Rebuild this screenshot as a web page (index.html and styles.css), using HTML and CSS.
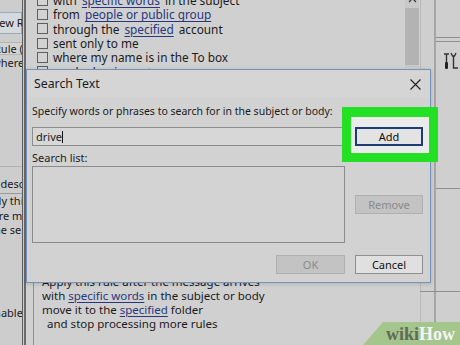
FILE: index.html
```html
<!DOCTYPE html>
<html lang="en">
<head>
  <meta charset="UTF-8" />
  <title>Search Text</title>
  <link rel="stylesheet" href="styles.css">
</head>
<body>
  <div class="desk">
    <!-- Rules and Alerts window, mostly hidden -->
    <aside class="rules-pane">
      <div class="new-rule">New Rule...</div>
      <div class="col-head">Rule (applied in the order shown)</div>
      <div class="pane-line l-where">where my name is in the To box</div>
      <div class="desc-head">Rule description</div>
      <div class="pane-line l-apply">Apply this rule after the message arrives</div>
      <div class="pane-line l-where2">where my name is in the To box</div>
      <div class="pane-line l-sender">the sender</div>
      <div class="pane-line l-enable">Enable</div>
    </aside>

    <!-- Rules Wizard window -->
    <section class="wizard">
      <div class="cond-area">
        <ul class="cond-list">
          <li><span class="box"></span>with <a>specific words</a> in the subject</li>
          <li><span class="box"></span>from <a>people or public group</a></li>
          <li><span class="box"></span>through the <a>specified</a> account</li>
          <li><span class="box"></span>sent only to me</li>
          <li><span class="box"></span>where my name is in the To box</li>
          <li><span class="box"></span>marked as importance</li>
        </ul>
        <div class="scrollbar">
          <svg class="arrow" width="9" height="6" viewBox="0 0 9 6"><path d="M1 5 L4.5 1.5 L8 5" fill="none" stroke="#333" stroke-width="1.2"/></svg>
          <div class="thumb"></div>
        </div>
      </div>
      <div class="desc-box">
        <div>Apply this rule after the message arrives</div>
        <div>with <a>specific words</a> in the subject or body</div>
        <div>move it to the <a>specified</a> folder</div>
        <div class="indent">and stop processing more rules</div>
      </div>
    </section>

    <!-- window behind, right edge -->
    <aside class="side-pane">
      <div class="side-inner">
        <div class="side-rule"></div>
        <svg class="tool-icon" width="16" height="18" viewBox="0 0 16 18">
          <path d="M1 2 H6 M3.5 2 V11" stroke="#333" stroke-width="1.4" fill="none"/>
          <rect x="2" y="10" width="3" height="7" rx="1.2" fill="#222"/>
          <path d="M8 1 L9.5 4 H11.5 L13 1 M10.5 4 V16 H15" stroke="#333" stroke-width="1.4" fill="none"/>
        </svg>
        <div class="side-rule low"></div>
        <div class="side-rule last"></div>
      </div>
    </aside>

    <!-- Search Text dialog -->
    <div class="dialog">
      <div class="dialog-title">
        <span>Search Text</span>
        <svg class="close" width="11" height="11" viewBox="0 0 11 11"><path d="M0.5 0.5 L10.5 10.5 M10.5 0.5 L0.5 10.5" stroke="#1e1e1e" stroke-width="1.1"/></svg>
      </div>
      <div class="dialog-body">
        <div class="prompt">Specify words or phrases to search for in the subject or body:</div>
        <div class="text-input">drive<span class="caret"></span></div>
        <button class="btn add">Add</button>
        <div class="list-label">Search list:</div>
        <div></div>
        <div class="search-list"></div>
        <button class="btn disabled remove">Remove</button>
        <div class="footer">
          <button class="btn disabled ok">OK</button>
          <button class="btn">Cancel</button>
        </div>
      </div>
      <div class="highlight"></div>
    </div>

    <div class="wikihow"><span class="wiki">wiki</span>How</div>
  </div>
</body>
</html>
```

FILE: styles.css
```css
body {
  margin: 0;
  background: #cecece;
  font-family: "Noto Sans", "Open Sans", sans-serif;
  font-size: 11px;
  color: #1b1b1b;
  overflow: hidden;
}

.desk {
  position: relative;
  width: 460px;
  height: 345px;
  overflow: hidden;
}

a {
  color: #27387f;
  text-decoration: underline;
  text-underline-offset: 2px;
}

/* left window */
.rules-pane {
  position: absolute;
  left: 0;
  top: 0;
  width: 22px;
  height: 345px;
  overflow: hidden;
  white-space: nowrap;
  border-right: 1px solid #5d5d5d;
  background: #cdcdcd;
}

.rules-pane div {
  box-sizing: border-box;
}

.new-rule {
  margin: 12px 0 0 -12px;
  height: 22px;
  line-height: 20px;
  padding-left: 2px;
  background: #d5dadf;
  border: 1px solid #98a9bb;
}

.col-head {
  margin: 8px 0 0 -7px;
  height: 13px;
  line-height: 11px;
  border: 1px solid #b4b4b4;
  border-right: none;
  background: #d4d4d4;
}

.pane-line {
  line-height: 14.5px;
}

.l-where {
  margin-left: -8px;
  line-height: 15px;
}

.desc-head {
  margin: 96px 0 0 -25px;
  height: 28px;
  padding-top: 9px;
  line-height: 16px;
  border-top: 1px solid #b0b0b0;
  border-bottom: 1px solid #9a9a9a;
}

.l-apply {
  margin-left: -22px;
}

.l-where2 {
  margin-left: -23px;
}

.l-sender {
  margin-left: -10px;
}

.l-enable {
  margin: 68px 0 0 -12px;
}

/* wizard window */
.wizard {
  position: absolute;
  left: 24px;
  top: 0;
  width: 395px;
  height: 345px;
  border-left: 2px solid #6a6a6a;
  background: #d0d0d0;
  display: grid;
  grid-template-rows: 275px 1fr;
}

.cond-area {
  display: flex;
  align-items: flex-start;
  padding-right: 1px;
  border-right: 1px solid #9c9c9c;
}

.cond-list {
  flex: 1;
  list-style: none;
  margin: -7px 0 0;
  padding: 0 0 0 11px;
  white-space: nowrap;
}

.cond-list li {
  display: flex;
  align-items: center;
  height: 14.3px;
  line-height: 14px;
  gap: 5px;
  font-size: 11.8px;
}

.box {
  width: 9px;
  height: 9px;
  border: 1px solid #5e5e5e;
  background: #d3d3d3;
  flex: none;
}

.scrollbar {
  width: 14px;
  height: 68px;
  background: #c9c9c9;
  position: relative;
}

.arrow {
  position: absolute;
  left: 3px;
  top: -3px;
}

.thumb {
  margin-top: 8px;
  height: 57px;
  background: #b3b3b3;
}

.desc-box {
  margin-left: 7px;
  padding-left: 8px;
  border-left: 1px solid #8e8e8e;
  line-height: 14px;
  font-size: 11.5px;
  white-space: nowrap;
}

.desc-box .indent {
  padding-left: 5px;
}

/* right window */
.side-pane {
  position: absolute;
  left: 420px;
  top: 0;
  width: 40px;
  height: 345px;
  border-left: 1px solid #b9b9b9;
  background: #cfcfcf;
}

.side-inner {
  margin-left: 13px;
  height: 100%;
  border-left: 2px solid #a5a5a5;
  padding-top: 37px;
}

.side-rule {
  height: 3px;
  border-top: 1px solid #8f8f8f;
  border-bottom: 1px solid #8f8f8f;
}

.side-rule.low {
  margin-top: 118px;
  height: 0;
  border-bottom: none;
}

.side-rule.last {
  margin: 102px 0 0 -16px;
  height: 0;
  border-bottom: none;
}

.tool-icon {
  display: block;
  margin: 10px 0 0 7px;
}

/* dialog */
.dialog {
  position: absolute;
  left: 26px;
  top: 69px;
  width: 403px;
  height: 212px;
  border: 1px solid #7493bb;
  background: #d2d2d2;
  box-shadow: 0 1px 4px rgba(0, 0, 0, 0.15);
}

.dialog-title {
  height: 27px;
  display: flex;
  align-items: center;
  justify-content: space-between;
  padding: 0 9px 0 7px;
  font-size: 12.3px;
  background: #d5d5d5;
}

.close {
  margin-top: 1px;
}

.dialog-body {
  display: grid;
  grid-template-columns: 313px 68px;
  column-gap: 10px;
  padding: 6px 8px 0 5px;
}

.prompt {
  grid-column: 1 / -1;
  line-height: 16px;
  margin-bottom: 8px;
  white-space: nowrap;
  font-size: 10.5px;
}

.text-input {
  height: 17px;
  line-height: 17px;
  padding-left: 3px;
  border: 1px solid #8d8d8d;
  background: #d7d7d7;
  display: flex;
  align-items: center;
}

.caret {
  width: 1px;
  height: 12px;
  background: #111;
}

.btn {
  height: 19px;
  padding: 0;
  font: inherit;
  color: #111;
  border: 1px solid #8f8f8f;
  background: #e0e0e0;
}

.btn.add {
  position: relative;
  z-index: 2;
  border: 2px solid #1d3c73;
  background: #e3e3e3;
}

.btn.disabled {
  background: #c3c3c3;
  border-color: #b0b0b0;
  color: #8a8a8a;
}

.list-label {
  line-height: 16px;
  margin-top: 4px;
}

.search-list {
  height: 75px;
  border: 1px solid #8b8b8b;
  background: #d3d3d3;
}

.btn.remove {
  margin-top: 29px;
}

.footer {
  grid-column: 1 / -1;
  display: flex;
  justify-content: flex-end;
  gap: 10px;
  margin-top: 12px;
}

.footer .btn {
  width: 68px;
}

.footer .btn.ok {
  width: 69px;
}

.highlight {
  position: absolute;
  left: 315px;
  top: 37px;
  width: 78px;
  height: 36px;
  border: 9px solid #24e024;
  border-top-width: 10px;
  background: #ebebeb;
  z-index: 1;
}

/* watermark */
.wikihow {
  position: absolute;
  right: 0;
  bottom: 0;
  width: 74px;
  height: 23px;
  padding-left: 23px;
  line-height: 24px;
  background: #a4c58c;
  clip-path: polygon(20px 0, 100% 0, 100% 100%, 0 100%);
  font-family: "Liberation Serif", "DejaVu Serif", serif;
  font-weight: bold;
  font-size: 18px;
  color: #f4f4f4;
}

.wiki {
  color: #5f6a58;
}
```
